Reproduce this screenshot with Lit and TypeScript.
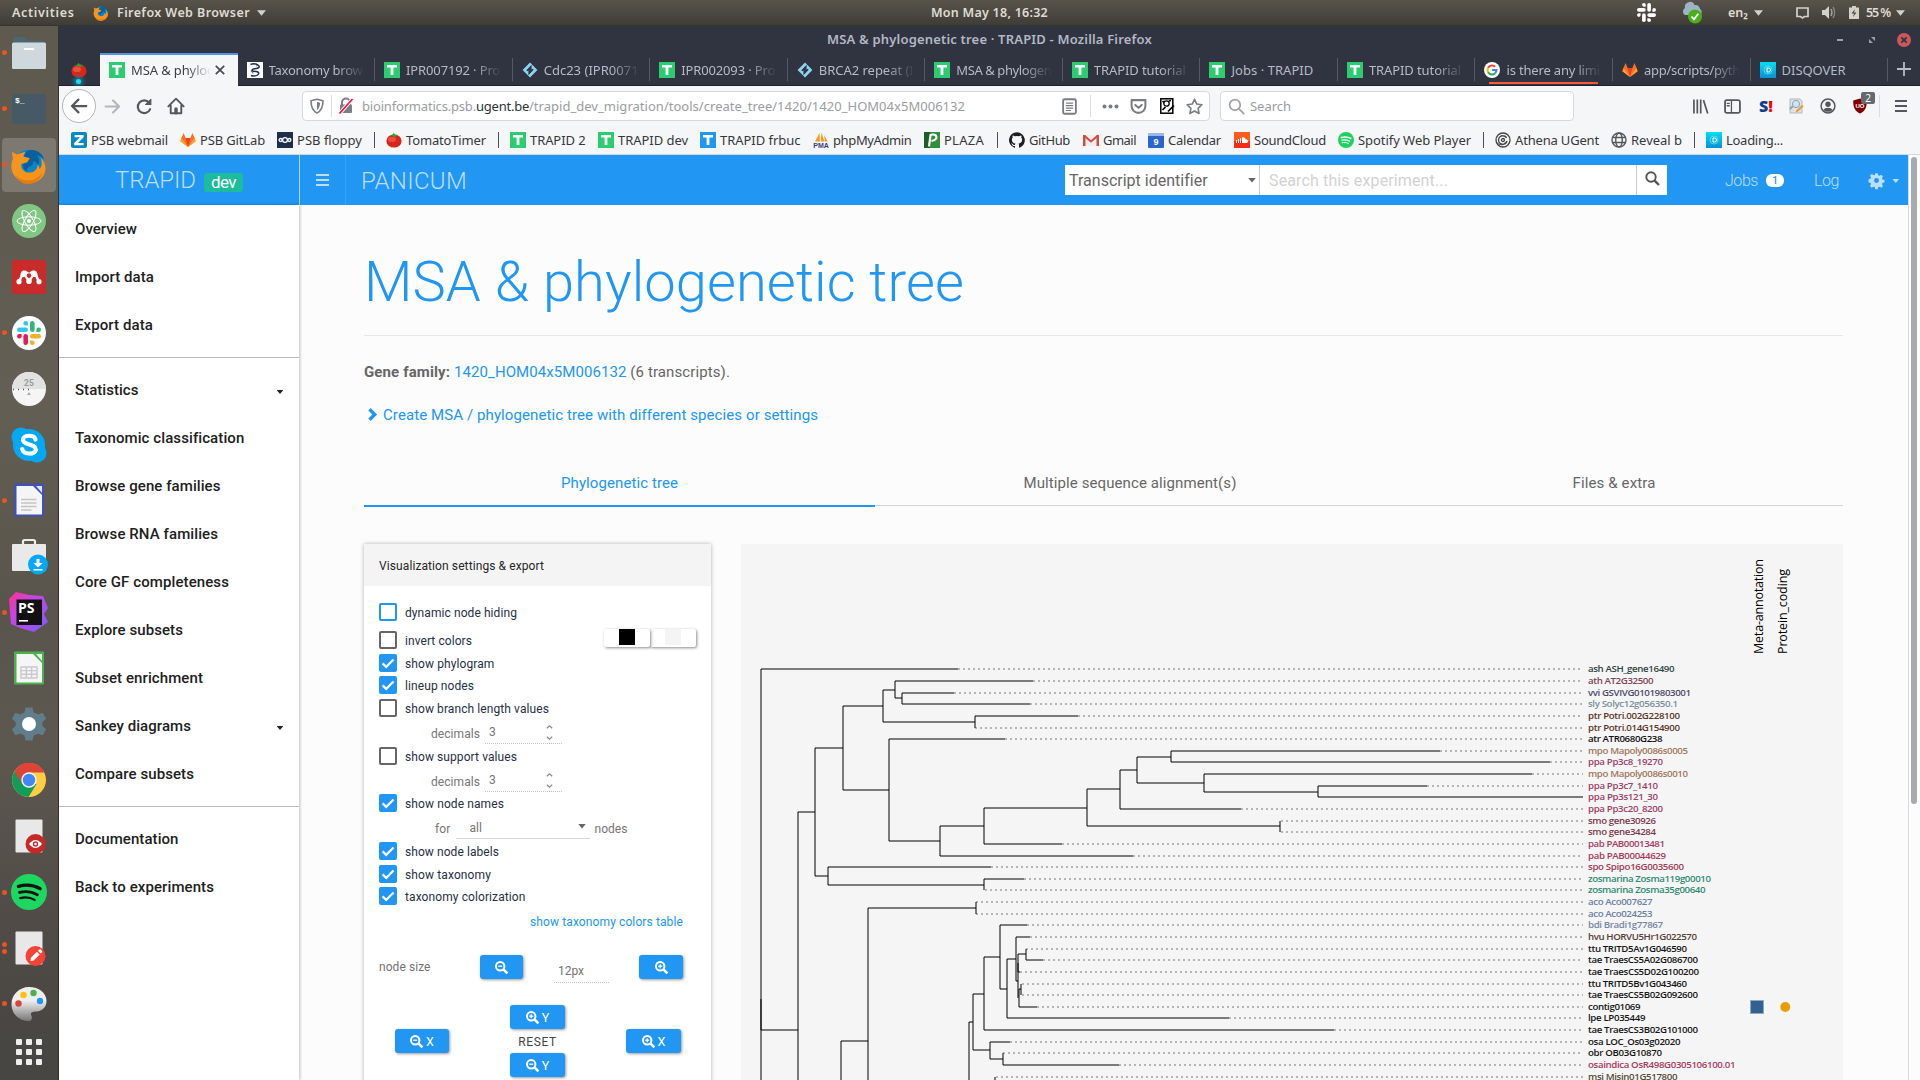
import { LitElement, html, svg, css, nothing, TemplateResult } from "lit";
import { customElement, property } from "lit/decorators.js";

/* Inline text whose tracking is adjusted so that it fills a given width. */
@customElement("fit-text")
class FitText extends LitElement {
  static styles = css`
    :host { display: inline-block; white-space: pre; }
  `;
  @property({ type: Number }) w = 0;
  @property() text = "";
  render() {
    return html`<span>${this.text}</span>`;
  }
  firstUpdated() {
    const span = this.renderRoot.querySelector("span") as HTMLElement;
    const natural = span.getBoundingClientRect().width;
    if (this.w > 0 && natural > 0) {
      this.style.letterSpacing = `${(this.w - natural) / this.text.length}px`;
    }
  }
}

const fit = (text: string, w: number) => html`<fit-text .text=${text} .w=${w}></fit-text>`;

type Placed = [number, unknown];
/* Lays cells out in a row; every cell reaches up to the start of the next one. */
const strip = (start: number, end: number, items: Placed[]) => html`
  <div class="cell" style="width:${items[0][0] - start}px"></div>
  ${items.map(([x, content], i) => {
    const next = i + 1 < items.length ? items[i + 1][0] : end;
    return html`<div class="cell" style="width:${next - x}px">${content}</div>`;
  })}
`;

const ico = (w: number, h: number, body: unknown, vb = `0 0 ${w} ${h}`) =>
  html`<svg class="ico" width=${w} height=${h} viewBox=${vb}>${body}</svg>`;

/* ---------- small icons, 16 x 16 ---------- */
const tIcon = (c = "#2ecc71") => ico(16, 16, svg`<rect width="16" height="16" fill=${c}/><path d="M3 3h10v2.6H9.4V13H6.6V5.6H3z" fill="#fff"/>`);
const tomato = ico(16, 16, svg`<ellipse cx="8" cy="9" rx="7.6" ry="6.6" fill="#d9261c"/><ellipse cx="6" cy="7.4" rx="4" ry="2.6" fill="#f0604e" opacity=".7"/><path d="M8 4.6 3.6 3.4 6.6 2.6 7.6.8l1.2 1.8 3.6.4-3 1.2 1 2z" fill="#3f9a33"/>`);
const gitlab = ico(16, 16, svg`<path d="M8 15 .4 9.2 1.6 5.6 3.6 1l2 5h4.8l2-5 2 4.6 1.2 3.6z" fill="#fc6d26"/><path d="M8 15 5.6 6h4.8z" fill="#e24329"/><path d="M.4 9.2 8 15 1.6 6zM15.6 9.2 8 15l6.4-9z" fill="#fca326"/>`);
const zimbra = ico(16, 16, svg`<rect width="16" height="16" rx="2" fill="#0a87c4"/><path d="M3.6 3h9v2.2L7 11h5.6v2.2H3.2V11l5.7-5.8H3.6z" fill="#fff"/>`);
const floppy = ico(16, 16, svg`<rect width="16" height="16" fill="#1d2d4a"/><g fill="none" stroke="#fff" stroke-width="1.3"><circle cx="8" cy="8" r="2.4"/><circle cx="3.6" cy="8" r="1.5"/><circle cx="12.4" cy="8" r="1.5"/></g>`);
const interpro = ico(16, 16, svg`<path d="M8 0.6 15.4 8 8 15.4.6 8z" fill="#8fd3f2"/><path d="M4.800 8.600 9 4.300v2.600zM11.200 7.400 7 11.700V9.100z" fill="#303440" stroke="#303440" stroke-width="1.200"/>`);
const ncbi = ico(16, 16, svg`<rect width="16" height="16" fill="#fff"/><path d="M3.500 2.500c3-1.500 7.500-.5 8.500 1.500s-2 2.500-4.500 2.800S4 9 7 9.300s5.500.7 4.500 2.700-5 2.500-7.500 1.500" fill="none" stroke="#20304f" stroke-width="1.500"/><path d="M9 1.800c1.500.5 1.500 1.700.5 2.200M5 8c-1.500 1 0 3 1.500 3" fill="none" stroke="#20304f" stroke-width=".8"/>`);
const google = ico(16, 16, svg`<circle cx="8" cy="8" r="8" fill="#fff"/><g fill="none" stroke-width="2.1"><path d="M11.200 4.800A4.500 4.500 0 0 0 4.100 5.800" stroke="#ea4335"/><path d="M4.100 5.800a4.500 4.500 0 0 0 0 4.400" stroke="#fbbc05"/><path d="M4.100 10.200a4.500 4.500 0 0 0 7 1" stroke="#34a853"/><path d="M8 8h4.500a4.500 4.500 0 0 1-1.400 3.200" stroke="#4285f4"/></g>`);
const disq = ico(16, 16, svg`<defs><linearGradient id="dq" x1="0" y1="0" x2="0" y2="1"><stop offset="0" stop-color="#00e0ee"/><stop offset="1" stop-color="#0a8fd8"/></linearGradient></defs><rect width="16" height="16" fill="url(#dq)"/><circle cx="8" cy="8" r="4" fill="none" stroke="#6fdcf5" stroke-width=".8"/><path d="M7 6h1.500a2 2 0 0 1 0 4H7z" fill="none" stroke="#fff" stroke-width="1"/>`);
const pma = ico(16, 16, svg`<path d="M2 9.500 6.500 1 7 9.500zM7.800 9.500 8.500.6l3 8.900zM12 9.500 11 3l3.600 6.500z" fill="#f89c1c"/><text x="8" y="16" font-family="Liberation Sans" font-size="7" font-weight="700" fill="#3d3d7a" text-anchor="middle">PMA</text>`);
const plaza = ico(16, 16, svg`<rect width="16" height="16" fill="#2f8f3a"/><rect width="6" height="16" fill="#1b5e2a"/><path d="M5 14.500 6.500 3c7-2.500 8.500 5 1 6" fill="none" stroke="#fff" stroke-width="2.200"/>`);
const github = ico(16, 16, svg`<path d="M8 .2a8 8 0 0 0-2.500 15.600c.4.100.5-.2.500-.4v-1.500c-2.200.5-2.700-1-2.700-1-.4-.9-.9-1.200-.9-1.200-.7-.5.100-.5.100-.5.800.1 1.200.8 1.200.8.700 1.300 1.900.9 2.300.7.100-.5.300-.9.500-1.100-1.800-.2-3.600-.9-3.600-4 0-.9.300-1.600.8-2.100-.1-.2-.4-1 .1-2.100 0 0 .7-.2 2.200.8a7.600 7.600 0 0 1 4 0c1.500-1 2.200-.8 2.200-.8.500 1.100.200 1.900.1 2.100.5.600.8 1.300.8 2.100 0 3.100-1.900 3.800-3.700 4 .3.300.6.800.6 1.500v2.200c0 .2.100.5.600.4A8 8 0 0 0 8 .2z" fill="#1b1f23"/>`);
const gmail = ico(16, 16, svg`<rect x="1" y="3" width="14" height="11" fill="#eee"/><path d="M1 3.500 8 9.500 15 3.500" fill="none" stroke="#d54b3d" stroke-width="2"/><path d="M0 3h2.500v11H0zM13.500 3H16v11h-2.500z" fill="#d54b3d"/>`);
const calendar = ico(16, 16, svg`<rect y="1" width="16" height="15" rx="1" fill="#2a66d0"/><rect y="1" width="16" height="3" fill="#9cb7e4"/><text x="8" y="13" font-family="Liberation Sans" font-size="9" font-weight="700" fill="#fff" text-anchor="middle">9</text>`);
const soundcloud = ico(16, 16, svg`<rect width="16" height="16" fill="#ff5a1f"/><rect y="9" width="16" height="7" fill="#fb2a18"/><path d="M2.500 8v3M4.500 7v4M6.500 6v5" stroke="#fff" stroke-width="1"/><path d="M8 5.500c2-.8 3.500.6 3.700 2 1.500-.3 2.500.6 2.500 1.800 0 1-.8 1.700-1.700 1.700H8z" fill="#fff"/>`);
const spotify = (s: number, bg: string, fg: string) => ico(s, s, svg`<circle cx="8" cy="8" r="8" fill=${bg}/><g fill="none" stroke=${fg} stroke-linecap="round"><path d="M3.300 5.500c3.300-.9 6.800-.6 9.600 1" stroke-width="1.500"/><path d="M3.800 8.200c2.700-.7 5.500-.4 7.900 1" stroke-width="1.250"/><path d="M4.100 10.700c2.300-.5 4.500-.3 6.400.8" stroke-width="1"/></g>`, "0 0 16 16");
const athena = ico(16, 16, svg`<g fill="none" stroke="#444"><circle cx="8" cy="8" r="7" stroke-width="1.300"/><path d="M12 9A4.300 4.300 0 1 1 8 3.700c2 0 3 1 3.500 2.300" stroke-width="1.400"/><circle cx="8" cy="8" r="1.500" stroke-width="1.300"/><path d="M2.500 11c3 3 7 2 8-1" stroke-width="1"/></g>`);
const globe = ico(16, 16, svg`<g fill="none" stroke="#55595d" stroke-width="1.400"><circle cx="8" cy="8" r="7"/><ellipse cx="8" cy="8" rx="3.300" ry="7"/><path d="M1.500 5.500h13M1.500 10.500h13"/></g>`);

const firefox = (s: number) => ico(s, s, svg`<circle cx="20" cy="20" r="16" fill="#0b84cc"/><path d="M18 5c8-3 16 2 18 9-3-3-5-4-8-4 3 3 4 7 1 10-1-3-3-4-5-4 1 3-1 5-4 6-2 1-3 3-1 5-4-1-6-5-5-8l6-3c-2-2-5-2-6-4z" fill="#0a5f9e"/><path d="M2 6 7 9l9-3-2 5 7 2-3 4-6 2c-1 5 3 9 8 9 6 0 9-4 9-8 2 1 2 3 2 4 3-2 3-8 1-12 7 6 7 16 1 22-7 7-19 7-26 0C1 28 0 20 3 14z" fill="#f7941d"/><path d="M6 31c8 8 22 7 28-3-2 8-8 12-15 12-6 0-11-4-13-9z" fill="#e67c0c"/>`, "0 0 40 40");

const caret = (c: string, w = 9, h = 6) => html`<svg class="ico" width=${w} height=${h} viewBox="0 0 10 6"><path d="M0 0h10L5 6z" fill=${c}/></svg>`;

/* Four bars with a rounded stub each, turned around the centre. */
const slackGlyph = (s: number, c: string[]) => ico(s, s, svg`
  ${[0, 1, 2, 3].map((i) => svg`<g fill=${c[i]} transform="rotate(${i * 90} 12 12)"><rect x="0" y="6.400" width="11" height="4.600" rx="2.300"/><path d="M11 4.600H8.700A2.300 2.300 0 1 1 11 2.300z"/></g>`)}`, "0 0 24 24");

/* ---------- dock ---------- */
const D = (body: unknown) => ico(40, 40, body);
const sheet = (c: string) => svg`<rect x="6.500" y="3.500" width="27" height="33" rx="1" fill="#e8e8e8"/><circle cx="26.500" cy="28" r="10" fill=${c}/>`;
const dock: { icon: TemplateResult; dots?: number; active?: boolean }[] = [
  { dots: 1, icon: D(svg`<path d="M4.500 4h11l3 3.500h16V20h-30z" fill="#4d6673"/><rect x="3" y="9.500" width="34" height="26.500" rx="1.500" fill="#cfd8dc"/><rect x="15" y="15" width="10" height="2" fill="#fff"/>`) },
  { dots: 1, icon: D(svg`<rect x="3" y="5" width="34" height="30" rx="1.500" fill="#455a64"/><text x="6" y="14" font-family="Liberation Mono" font-weight="700" font-size="8" fill="#fff">$_</text>`) },
  { dots: 1, active: true, icon: firefox(38) },
  { icon: D(svg`<circle cx="20" cy="20" r="17" fill="#81c784"/><g fill="none" stroke="#fff" stroke-width="1"><ellipse cx="20" cy="20" rx="12" ry="4.200"/><ellipse cx="20" cy="20" rx="12" ry="4.200" transform="rotate(60 20 20)"/><ellipse cx="20" cy="20" rx="12" ry="4.200" transform="rotate(120 20 20)"/></g><circle cx="20" cy="20" r="2" fill="#fff"/>`) },
  { icon: D(svg`<rect x="3" y="3" width="34" height="34" rx="2" fill="#c92a2a"/><path d="M10 24.500 13 18.500M16 18l4 6 4-6M27 18.500l3 6" fill="none" stroke="#fff" stroke-width="2.600"/><path d="M11.500 17a4 4 0 0 1 7-2.200q1.500 1.200 3 0A4 4 0 0 1 28.500 17v3h-4L20 17l-4.500 3h-4z" fill="#fff"/><g fill="#fff"><circle cx="10" cy="24.700" r="2.600"/><circle cx="20" cy="24.200" r="2.800"/><circle cx="30" cy="24.700" r="2.600"/></g><circle cx="20" cy="18.500" r="2.200" fill="#c92a2a"/>`) },
  { dots: 1, icon: html`<div class="slackdisc">${slackGlyph(24, ["#36c5f0", "#2eb67d", "#ecb22e", "#e01e5a"])}</div>` },
  { icon: D(svg`<circle cx="20" cy="20" r="17" fill="#f5f5f5"/><path d="M3 20a17 17 0 0 1 34 0z" fill="#e2e2e2"/><text x="20" y="17" font-family="Roboto" font-weight="700" font-size="8.500" fill="#9b9b9b" text-anchor="middle">25</text><path d="M4 20.500h17" stroke="#555" stroke-width="1.500" stroke-dasharray="1 4"/><path d="M18 26h4l-2-3z" fill="#aaa"/>`) },
  { icon: D(svg`<circle cx="20" cy="20" r="16" fill="#03a9f4"/><circle cx="12" cy="12" r="9.500" fill="#03a9f4"/><circle cx="28" cy="28" r="9.500" fill="#03a9f4"/><path d="M26.500 14.500c-1-5-12.500-5-12.500.2 0 5.800 12.800 3.600 12.800 9.800 0 5.600-13 5.300-13.600-.5" fill="none" stroke="#fff" stroke-width="4.200" stroke-linecap="round"/>`) },
  { dots: 1, icon: D(svg`<rect x="5" y="3.500" width="30" height="33" rx="1" fill="#3f51b5"/><path d="M7.500 6H24l9 9v19.500H7.500z" fill="#f5f5f5"/><path d="M27 6h6v7z" fill="#dfe3f5"/><path d="M12 19.500h15.500M12 23h15.500M12 26.500h15.500M12 30h10.500" stroke="#c3c3c3" stroke-width="1.500"/>`) },
  { icon: D(svg`<path d="M14 8V5.500q0-1.500 1.500-1.500h9q1.500 0 1.500 1.500V8" fill="none" stroke="#ececec" stroke-width="2.200"/><rect x="3" y="8" width="34" height="27" rx="1" fill="#e9e9e9"/><circle cx="29" cy="28.500" r="10" fill="#03a9f4"/><path d="M27.500 23h3v4h3L29 31.500 24.500 27h3zM24.500 33h9v1.500h-9z" fill="#fff"/>`) },
  { dots: 1, icon: D(svg`<defs><linearGradient id="ps" x1="0" y1="0" x2="1" y2="1"><stop offset="0" stop-color="#ff318c"/><stop offset=".35" stop-color="#c945e0"/><stop offset="1" stop-color="#7b5cff"/></linearGradient></defs><path d="M0 7 7 0l13 3 14 1 5 12-4 6 4 8-7 5-7 5-14-4-9-4z" fill="url(#ps)"/><rect x="7.500" y="7.500" width="25.500" height="25.500" fill="#111"/><text x="9" y="20.500" font-family="Open Sans" font-weight="700" font-size="14" fill="#fff">PS</text><rect x="10" y="28" width="9" height="1.600" fill="#fff"/>`) },
  { icon: D(svg`<rect x="5" y="3.500" width="30" height="33" rx="1" fill="#4caf50"/><path d="M7.500 6H24l9 9v19.500H7.500z" fill="#f5f5f5"/><path d="M27 6h6v7z" fill="#dff2df"/><path d="M12 19h16v11H12zM12 22.600h16M12 26.300h16M17.300 19v11M22.600 19v11" fill="none" stroke="#c9c9c9" stroke-width="1.400"/>`) },
  { icon: D(svg`<path d="M16.500 3.500h7l1.200 5 4 2 5-1.800 3.300 6-3.700 3.600v3.400l3.700 3.600-3.300 6-5-1.800-4 2-1.200 5h-7l-1.200-5-4-2-5 1.800-3.300-6 3.700-3.600v-3.400L3 14.700l3.300-6 5 1.800 4-2z" fill="#607d8b"/><circle cx="20" cy="20" r="7" fill="#fff"/>`) },
  { icon: D(svg`<circle cx="20" cy="20" r="17" fill="#ffcd40"/><path d="M5.300 11.500A17 17 0 0 0 19.500 37l8-13L20 20z" fill="#0f9d58"/><path d="M5.500 11A17 17 0 0 1 35.500 12.500H20L13 24z" fill="#db4437"/><circle cx="20" cy="20" r="7.700" fill="#f1f1f1"/><circle cx="20" cy="20" r="6.200" fill="#4285f4"/>`) },
  { icon: D(svg`${sheet("#c62828")}<path d="M20 28q6.500-8 13 0-6.500 8-13 0z" fill="#fff"/><circle cx="26.500" cy="28" r="2" fill="none" stroke="#c62828" stroke-width="1.400"/>`) },
  { dots: 1, icon: spotify(36, "#1ed760", "#121212") },
  { dots: 2, icon: D(svg`${sheet("#f44336")}<path d="m21.500 33 .4-3.200 6-6 2.800 2.800-6 6zM28.900 22.800l1.300-1.300q.8-.6 1.500 0l1.300 1.300q.6.8 0 1.500l-1.300 1.300z" fill="#fff"/>`) },
  { dots: 1, icon: D(svg`<defs><linearGradient id="pl" x1="0" y1="0" x2="0" y2="1"><stop offset=".4" stop-color="#eee"/><stop offset="1" stop-color="#777"/></linearGradient></defs><path d="M20 3c10 0 17.500 6 17.500 14S31 27.500 27 27.500c-5 0-6 2-4.500 4.500 1 2 0 5-2.500 5C9 37 2.500 29 2.500 20S10 3 20 3z" fill="url(#pl)"/><circle cx="14.500" cy="11" r="3.200" fill="#ffc107"/><circle cx="24.500" cy="9" r="3.200" fill="#4caf50"/><circle cx="31" cy="17" r="3.200" fill="#2196f3"/><circle cx="9.500" cy="19.500" r="3.200" fill="#db4437"/>`) },
];

/* ---------- navigation icons ---------- */
const N = "#54585c";
const stroke = (s: number, body: unknown, c = N, w = 2) => html`<svg class="ico" width=${s} height=${s} viewBox="0 0 16 16" fill="none" stroke=${c} stroke-width=${w} stroke-linecap="round" stroke-linejoin="round">${body}</svg>`;
const arrowL = stroke(18, svg`<path d="M14.500 8H2M7.500 2.300 1.800 8l5.700 5.700"/>`);
const arrowR = stroke(17, svg`<path d="M1.500 8H14M8.500 2.300 14.200 8l-5.700 5.700"/>`, "#b4b6b9");
const reload = stroke(17, svg`<path d="M13.300 10.500a6 6 0 1 1-.9-6"/><path d="M14 1.200v5h-5z" fill="#54585c" stroke-width="1"/>`);
const home = stroke(18, svg`<path d="M1.200 8.300 8 1.500l6.800 6.800M3.300 7.500V14.500h9.400V7.500"/><path d="M8 14v-3.500" stroke-width="3"/>`, N, 1.7);
const shield = stroke(16, svg`<path d="M8 1.200 14 2.700c0 6-1.500 10-6 12.300C3.500 12.700 2 8.700 2 2.700z"/><path d="M8 4v8c2-1.500 3-4 3.200-7.200z" fill="#7b7e82" stroke="none"/>`, "#7b7e82", 1.6);
const lock = ico(18, 18, svg`<path d="M5 8V5.500a4 4 0 0 1 8 0V8" fill="none" stroke="#7b7e82" stroke-width="2"/><rect x="3" y="7.500" width="12" height="8.500" rx="1" fill="#7b7e82"/><path d="M3 16 15.500 2" stroke="#fff" stroke-width="3.500"/><path d="M2.500 16.500 15.500 2" stroke="#f5114c" stroke-width="1.800"/>`);
const reader = stroke(17, svg`<rect x="2" y="1.200" width="12" height="13.600" rx="1.500"/><path d="M5 4.800h6M5 7.200h6M5 9.500h6M5 11.800h4" stroke-width="1.100"/>`, "#797c80", 1.700);
const dots3 = ico(17, 5, svg`<g fill="#797c80"><circle cx="2.500" cy="2.500" r="2"/><circle cx="8.500" cy="2.500" r="2"/><circle cx="14.500" cy="2.500" r="2"/></g>`);
const pocket = stroke(17, svg`<path d="M1.500 2h13v5.500a6.500 6.500 0 0 1-13 0zM5 6.500 8 9.300l3-2.800"/>`, "#797c80", 1.900);
const qr = ico(15, 16, svg`<rect x=".8" y=".8" width="12" height="14.400" fill="#fff" stroke="#000" stroke-width="1.500"/><circle cx="6.500" cy="5.500" r="2.700" fill="none" stroke="#000" stroke-width="1.300"/><path d="M2.500 3 4 4.500M9 3l2-.5M2.500 12l3-3M8 13.500l6-6" stroke="#000" stroke-width="1.700"/>`);
const star = stroke(17, svg`<path d="m8 1.200 2.100 4.500 4.900.6-3.600 3.400.9 4.900L8 12.200l-4.300 2.400.9-4.900L1 6.300l4.900-.6z"/>`, "#797c80", 1.500);
const glass = stroke(17, svg`<circle cx="6.500" cy="6.500" r="5"/><path d="m10.300 10.300 4.500 4.500"/>`, "#a0a2a5", 1.600);
const library = stroke(17, svg`<path d="M1.800 1.500v13M5 1.500v13M8.200 1.500v13M10.800 2l4 12.500" stroke-linecap="butt"/>`, N, 1.600);
const sidebarI = stroke(17, svg`<rect x="1" y="2" width="14" height="12" rx="1.500"/><path d="M7 2v12M3 5h2M3 7.300h2" stroke-width="1.200"/>`, N, 1.700);
const simg = ico(16, 16, svg`<path d="M2 1h10l2 2v12H2z" fill="#dfe3e6" stroke="#a9a9a9" stroke-width=".8"/><circle cx="8" cy="6" r="3.600" fill="#cfe4f5" stroke="#8aa4b8"/><path d="m2 11 3-3" stroke="#8aa4b8" stroke-width="1.800"/><path d="m7.500 14.500.8-2.300L14 6.800l1.700 1.700-5.800 5.300z" fill="#e2a04a"/>`);
const person = ico(16, 16, svg`<circle cx="8" cy="8" r="6.900" fill="none" stroke=${N} stroke-width="1.500"/><circle cx="8" cy="6.200" r="2.700" fill=${N}/><path d="M3.600 11.700c1-2.700 7.800-2.700 8.800 0-2 2.800-6.800 2.800-8.800 0z" fill=${N}/>`);
const ublock = ico(16, 16, svg`<path d="m8 .4 6.800 2c0 6.400-1 10-6.800 13.200C2.200 12.400 1.200 8.800 1.200 2.400z" fill="#800000"/><text x="8" y="9.500" text-anchor="middle" font-family="Liberation Sans" font-size="6" font-weight="700" fill="#fff">UO</text>`);
const burger = (w: number, h: number, c: string, s: number) => html`<svg class="ico" width=${w} height=${h} viewBox="0 0 ${w} ${h}"><path d="M0 ${s / 2}h${w}M0 ${h / 2}h${w}M0 ${h - s / 2}h${w}" stroke=${c} stroke-width=${s}/></svg>`;
const zoomI = (plus: boolean) => html`<svg class="ico" width="13" height="13" viewBox="0 0 13 13" fill="none" stroke="#fff"><circle cx="5.200" cy="5.200" r="4.200" stroke-width="2"/><path d="m8.400 8.400 4 4" stroke-width="2.500"/><path d="M3.200 5.200h4" stroke-width="1.300"/>${plus ? svg`<path d="M5.200 3.200v4" stroke-width="1.300"/>` : nothing}</svg>`;
const gear = ico(15, 15, svg`<path d="M6.200 0h2.600l.4 2 1.500.6 1.700-1.100 1.800 1.800-1.100 1.700.6 1.500 2 .4v2.600l-2 .4-.6 1.500 1.100 1.700-1.800 1.800-1.700-1.100-1.500.6-.4 2H6.200l-.4-2-1.500-.6-1.700 1.100-1.800-1.800 1.100-1.700-.6-1.500-2-.4V6.200l2-.4.6-1.500L.8 2.600 2.600.8l1.700 1.100L5.800 2zM7.500 5a2.500 2.500 0 1 0 0 5 2.500 2.500 0 0 0 0-5z" fill="#bbdefb" fill-rule="evenodd"/>`, "0 -.2 15 15.400");

/* ---------- tree data ---------- */
type Leaf = [string, number, string, number, number];
/* label, y, colour, label width, x at which the dotted guide starts */
const leaves: Leaf[] = [
  ["ash ASH_gene16490", 669, "#2f4540", 86.5, 958],
  ["ath AT2G32500", 681, "#7d4658", 65.5, 1033],
  ["vvi GSVIVG01019803001", 693, "#4a4a6a", 103, 954],
  ["sly Solyc12g056350.1", 704, "#7a8f99", 90, 1030],
  ["ptr Potri.002G228100", 716, "#5a3526", 92, 1078],
  ["ptr Potri.014G154900", 728, "#5a3526", 92, 975],
  ["atr ATR0680G238", 739, "#111111", 74.5, 1005],
  ["mpo Mapoly0086s0005", 751, "#a0765c", 100, 1440],
  ["ppa Pp3c8_19270", 762, "#9c3f68", 75, 1550],
  ["mpo Mapoly0086s0010", 774, "#a0765c", 100, 1532],
  ["ppa Pp3c7_1410", 786, "#9c3f68", 70, 1427],
  ["ppa Pp3s121_30", 797, "#9c3f68", 70, 1583],
  ["ppa Pp3c20_8200", 809, "#9c3f68", 75, 1241],
  ["smo gene30926", 821, "#7a3a50", 68, 1281],
  ["smo gene34284", 832, "#7a3a50", 68, 1281],
  ["pab PAB00013481", 844, "#a83a5e", 77, 1062],
  ["pab PAB00044629", 856, "#a83a5e", 78, 1133],
  ["spo Spipo16G0035600", 867, "#a03a56", 96, 991],
  ["zosmarina Zosma119g00010", 879, "#2f8a72", 123, 1024],
  ["zosmarina Zosma35g00640", 890, "#2f8a72", 117.5, 985],
  ["aco Aco007627", 902, "#6a80a2", 64.500, 976],
  ["aco Aco024253", 914, "#6a80a2", 64.500, 976],
  ["bdi Bradi1g77867", 925, "#7587a8", 75, 1027],
  ["hvu HORVU5Hr1G022570", 937, "#564038", 109, 1030],
  ["ttu TRITD5Av1G046590", 949, "#161616", 99, 1026],
  ["tae TraesCS5A02G086700", 960, "#161616", 110, 1043],
  ["tae TraesCS5D02G100200", 972, "#161616", 111, 1020],
  ["ttu TRITD5Bv1G043460", 984, "#161616", 99, 1022],
  ["tae TraesCS5B02G092600", 995, "#161616", 110, 1022],
  ["contig01069", 1007, "#161616", 52.5, 1037],
  ["lpe LP035449", 1018, "#161616", 57.5, 1229],
  ["tae TraesCS3B02G101000", 1030, "#161616", 110, 1334],
  ["osa LOC_Os03g02020", 1042, "#161616", 92.5, 1010],
  ["obr OB03G10870", 1053, "#161616", 74, 1003],
  ["osaindica OsR498G0305106100.01", 1065, "#a83a5e", 147.5, 1119],
  ["msi Misin01G517800", 1077, "#564a38", 89.500, 996],
];
/* horizontal branches: y, x1, x2 */
const hor = [
  [669, 761, 958], [1030, 761, 798], [812, 798, 815], [748, 815, 843], [706, 843, 883], [690, 883, 895], [681, 895, 1033],
  [698, 895, 902], [693, 902, 954], [704, 902, 1030], [722, 883, 975], [716, 975, 1078], [790, 843, 889], [739, 889, 1005],
  [841, 889, 940], [856, 940, 1133], [826, 940, 984], [844, 984, 1062], [808, 984, 1087], [826, 1087, 1280], [789, 1087, 1120],
  [809, 1120, 1241], [770, 1120, 1137], [757, 1137, 1171], [751, 1171, 1440], [762, 1171, 1550], [783, 1137, 1204], [774, 1204, 1532],
  [792, 1204, 1318], [786, 1318, 1427], [797, 1318, 1583], [876, 815, 828], [867, 828, 991], [885, 828, 984], [879, 984, 1024],
  [908, 868, 976], [1041, 841, 868], [925, 1000, 1027], [957, 984, 1000], [989, 1000, 1007], [1018, 1007, 1229], [959, 1007, 1016],
  [937, 1016, 1030], [981, 1016, 1018], [954, 1018, 1026], [960, 1026, 1043], [972, 1018, 1020], [989, 1019, 1021], [1007, 1019, 1037],
  [1030, 984, 1334], [994, 973, 984], [1050, 973, 990], [1042, 990, 1010], [1059, 990, 1003], [1065, 1003, 1119], [1022, 969, 973],
];
/* vertical branches: x, y1, y2 */
const ver = [
  [761, 669, 1090], [761, 999, 1030], [798, 812, 1090], [815, 748, 876], [843, 706, 790], [883, 690, 722], [895, 681, 698], [902, 693, 704],
  [975, 716, 728], [889, 739, 841], [940, 826, 856], [984, 808, 844], [1087, 789, 826], [1280, 821, 832], [1120, 770, 809], [1137, 757, 783],
  [1171, 751, 762], [1204, 774, 792], [1318, 786, 797], [828, 867, 885], [984, 879, 890], [868, 908, 1090], [976, 902, 914], [841, 1041, 1090],
  [1000, 925, 989], [984, 957, 1030], [1007, 959, 1018], [1016, 937, 981], [1018, 954, 972], [1018, 963, 998], [1026, 949, 960], [1021, 984, 995],
  [1019, 989, 1007], [973, 994, 1050], [990, 1042, 1059], [1003, 1053, 1065], [969, 1022, 1090], [995, 1077, 1090],
];

const T = tIcon();
const tabs: [TemplateResult, string, number][] = [
  [T, "MSA & phylog", 84],
  [ncbi, "Taxonomy brow", 94],
  [T, "IPR007192 · Pro", 94],
  [interpro, "Cdc23 (IPR0071", 95],
  [T, "IPR002093 · Pro", 94],
  [interpro, "BRCA2 repeat (I", 95],
  [T, "MSA & phylogen", 95],
  [T, "TRAPID tutorial", 92],
  [T, "Jobs · TRAPID", 82],
  [T, "TRAPID tutorial", 92],
  [google, "is there any limit", 98],
  [gitlab, "app/scripts/pyth", 96],
  [disq, "DISQOVER", 64],
];

const bm = (icon: TemplateResult, text: string, w: number) => html`${icon}<span class="bmt">${fit(text, w)}</span>`;
const bsep = html`<i class="bsep"></i>`;

type Row = { label: string; w: number; h: number; on?: boolean; focus?: boolean; sub?: "dec" | "for"; swatch?: boolean };
const rows: Row[] = [
  { label: "dynamic node hiding", w: 112, h: 28, focus: true },
  { label: "invert colors", w: 67, h: 23, swatch: true },
  { label: "show phylogram", w: 89.5, h: 22, on: true },
  { label: "lineup nodes", w: 69, h: 23, on: true },
  { label: "show branch length values", w: 144, h: 48, sub: "dec" },
  { label: "show support values", w: 112, h: 47, sub: "dec" },
  { label: "show node names", w: 99, h: 48, on: true, sub: "for" },
  { label: "show node labels", w: 94, h: 23, on: true },
  { label: "show taxonomy", w: 86, h: 22, on: true },
  { label: "taxonomy colorization", w: 120.5, h: 18, on: true },
];

const menu: (string | [string, number, boolean?])[] = [
  ["Overview", 62], ["Import data", 79], ["Export data", 78], "-",
  ["Statistics", 63.5, true], ["Taxonomic classification", 169], ["Browse gene families", 145.5], ["Browse RNA families", 143],
  ["Core GF completeness", 154], ["Explore subsets", 108], ["Subset enrichment", 128], ["Sankey diagrams", 116, true], ["Compare subsets", 119], "-",
  ["Documentation", 103.5], ["Back to experiments", 139],
];

@customElement("app-root")
class AppRoot extends LitElement {
  static styles = css`
    :host { display: block; width: 1920px; height: 1080px; overflow: hidden; background: #fcfcfc; font-family: Roboto, sans-serif; color: #666; }
    * { box-sizing: border-box; }
    .ico { display: block; flex: none; overflow: visible; }
    .screen { display: flex; flex-direction: column; height: 1080px; }
    .cell { flex: none; display: flex; align-items: center; height: 100%; white-space: nowrap; }
    .topbar { height: 26px; flex: none; display: flex; background: linear-gradient(#58544b, #3f3d37); color: #dfdbd2; font: 600 12.5px "Noto Sans", sans-serif; border-bottom: 1px solid #34352f; }
    .topbar fit-text { padding-bottom: 1px; }
    .below { display: flex; flex: 1; min-height: 0; }
    .dock { width: 59px; flex: none; background: linear-gradient(#5f5a4f 0%, #5e5a50 15%, #645f54 35%, #5a554c 55%, #5d584f 68%, #504b47 85%, #464541 100%); border-right: 1px solid #35332e; display: flex; flex-direction: column; }
    .slot { height: 55.94px; flex: none; display: flex; align-items: center; position: relative; padding: 0 0 2px 2px; }
    .tile { width: 54px; height: 54px; border-radius: 4px; display: flex; align-items: center; justify-content: center; }
    .tile.active { background: #7d7970; }
    .dots { position: absolute; left: 2px; top: -1px; height: 100%; display: flex; flex-direction: column; justify-content: center; gap: 2.500px; }
    .dot { width: 5px; height: 5px; border-radius: 50%; background: #e95420; }
    .slackdisc { width: 34px; height: 34px; border-radius: 50%; background: #fff; display: flex; align-items: center; justify-content: center; }
    .grid9 { display: grid; grid-template-columns: repeat(3, 6px); grid-auto-rows: 6px; gap: 4px; padding: 6px 0 0 16px; }
    .grid9 i { border-radius: 1px; background: #eee; }
    .window { flex: 1; min-width: 0; display: flex; flex-direction: column; }
    .title { height: 27px; flex: none; background: #303440; display: flex; color: #b2b8c4; font: 600 13px "Noto Sans", sans-serif; }
    .title fit-text { padding-bottom: 2px; }
    .title .close { width: 14px; height: 14px; border-radius: 50%; background: #cc575d; color: #303440; display: flex; align-items: center; justify-content: center; }
    .tabs { height: 33px; flex: none; background: #303440; display: flex; color: #b4bac6; font: 400 13px "Noto Sans", sans-serif; border-bottom: 1px solid #1f222b; }
    .pin { width: 41px; display: flex; flex-direction: column; align-items: center; padding: 9px 2px 0 0; }
    .pin i { width: 5px; height: 5px; border-radius: 50%; background: #19dcf0; box-shadow: 0 0 4px 2px #0e8aa0; margin-top: 1px; }
    .tab { width: 137.55px; flex: none; display: flex; align-items: center; padding: 1px 0 0 9px; position: relative; }
    .tab::after { content: ""; position: absolute; right: 0; top: 5px; bottom: 4px; width: 1px; background: #555a66; }
    .tab.on { background: #f5f6f7; color: #3b3e45; border-top: 2px solid #5294e2; padding-top: 0; height: 33px; }
    .tab.on .ico, .tab.on .tt { margin-top: -1px; }
    .tab.on::after { display: none; }
    .tt { width: 96px; margin-left: 6px; overflow: hidden; -webkit-mask-image: linear-gradient(90deg, #000 70%, transparent 100%); }
    .on .tt { width: 80px; }
    .tt.full { -webkit-mask-image: none; }
    .attnbar { position: absolute; left: 14px; width: 109px; bottom: 1px; height: 2px; background: #fc5a3a; }
    .x { margin-left: 4px; }
    .plus { flex: 1; display: flex; align-items: center; justify-content: center; }
    .nav { height: 39px; flex: none; background: #f5f6f7; display: flex; align-items: center; padding-top: 1px; font: 400 13px "Noto Sans", sans-serif; color: #9a9da1; }
    .back { width: 34px; height: 34px; border-radius: 50%; border: 1px solid #b3b5b9; background: #fff; display: flex; align-items: center; justify-content: center; }
    .box { height: 30px; border: 1px solid #d6d9dd; border-radius: 4px; background: #fff; display: flex; }
    .vs { width: 1px; height: 22px; background: #dadcdf; }
    .host { color: #2e3436; }
    .ubl { position: relative; }
    .cnt { position: absolute; left: 9px; top: -6px; width: 14px; height: 12px; border-radius: 2px; background: #666a6e; color: #fff; font: 10px/12px "Noto Sans", sans-serif; text-align: center; }
    .sx { font: 800 16px "Open Sans", sans-serif; color: #0b3f8f; }
    .sx b { color: #f00; }
    .marks { height: 30px; flex: none; background: #f5f6f7; border-bottom: 1px solid #d5d8dc; display: flex; font: 400 13px "Noto Sans", sans-serif; color: #34383c; }
    .bmt { margin-left: 4px; }
    .bsep { width: 1px; height: 16px; background: #4b4e52; }
    .page { flex: 1; min-height: 0; display: flex; }
    .doc { flex: 1; display: flex; flex-direction: column; min-width: 0; }
    .bar { height: 50px; flex: none; display: flex; background: #2196f3; color: #bbdefb; }
    .brand { width: 241px; border-right: 1px solid #a9d6fa; display: flex; align-items: center; padding-left: 56px; font-size: 24px; font-weight: 300; }
    .dev { background: #1cbc9c; border-radius: 3px; color: #fff; width: 39px; height: 19px; margin: 4px 0 0 8px; font-size: 17px; font-weight: 400; display: flex; align-items: center; justify-content: center; }
    .ham { width: 46px; border-right: 1px solid #2fa6fb; display: flex; align-items: center; justify-content: center; }
    .exp { padding-left: 15px; width: 719px; font-size: 24px; font-weight: 300; display: flex; align-items: center; padding-top: 2px; }
    .find { display: flex; height: 30px; margin-top: 10px; background: #fff; color: #666; font-size: 16px; width: 602px; }
    .sel { width: 195px; border-right: 1px solid #ccc; display: flex; align-items: center; justify-content: space-between; padding: 0 3px 0 4px; }
    .inp { width: 377px; border-right: 1px solid #ccc; display: flex; align-items: center; padding-left: 9px; color: #d2d2d2; }
    .btn { flex: 1; display: flex; align-items: center; justify-content: center; padding-bottom: 3px; }
    .right { display: flex; font-size: 16px; font-weight: 300; padding-top: 1px; }
    .pill { width: 18px; height: 13px; border-radius: 6px; background: #fff; color: #2196f3; font: 500 10px/13px Roboto, sans-serif; text-align: center; }
    .body { flex: 1; display: flex; min-height: 0; }
    .side { width: 240px; flex: none; background: #fff; box-shadow: 1px 0 3px rgba(0,0,0,.25); display: flex; flex-direction: column; z-index: 1; color: #212121; font-size: 15px; font-weight: 500; }
    .mi { height: 48px; flex: none; display: flex; align-items: center; justify-content: space-between; padding: 0 15px 0 16px; }
    .mi svg { margin-top: 3px; }
    .hr { height: 1px; flex: none; background: #bbb; margin: 8px 0; }
    .main { flex: 1; padding: 0 65px; min-width: 0; display: flex; flex-direction: column; overflow: hidden; }
    .h1 { height: 131px; flex: none; border-bottom: 1px solid #e8e8e8; color: #2196f3; font-size: 56px; line-height: 66px; font-weight: 300; padding: 44px 0 0 0; }
    .p1 { font-size: 15px; line-height: 20px; padding-top: 26px; flex: none; height: 46px; }
    .p1 b { font-weight: 700; }
    .blue { color: #2196f3; }
    .p2 { flex: none; height: 63px; padding: 23px 0 0 4px; font-size: 15px; line-height: 20px; color: #2196f3; display: flex; align-items: flex-start; gap: 5px; }
    .p2 svg { margin-top: 3px; }
    .seg { height: 57px; flex: none; display: flex; font-size: 15px; margin-top: 5px; }
    .seg div { display: flex; justify-content: center; align-items: flex-end; padding-bottom: 12px; line-height: 20px; border-bottom: 1px solid #d5d5d5; margin-bottom: 1px; }
    .seg .s1 { width: 511px; color: #2196f3; border-bottom: 2px solid #2196f3; margin-bottom: 0; }
    .seg .s2 { width: 510px; } .seg .s3 { flex: 1; }
    .cols { display: flex; gap: 30px; margin-top: 37px; flex: 1; min-height: 0; }
    .card { width: 347px; flex: none; background: #fff; box-shadow: 0 0 4px rgba(0,0,0,.3); font-size: 12px; color: #737373; margin-bottom: -20px; }
    .ch { height: 42px; background: #f4f4f4; color: #262626; display: flex; align-items: center; padding-left: 15px; padding-top: 1px; }
    .rows { padding: 17px 15px 0; }
    .row { color: #263045; }
    .line { display: flex; height: 18px; align-items: center; gap: 8px; }
    .line fit-text { padding-top: 2px; }
    .cb { width: 18px; height: 18px; border: 2px solid #666; border-radius: 2px; flex: none; background: #fff; }
    .cb.focus { border-color: #2196f3; }
    .cb.on { background: #2196f3; border: none; }
    .cb svg { display: block; }
    .sw { display: flex; margin-left: auto; margin-top: -4px; }
    .sw i { width: 46px; height: 18px; background: #fff; border-radius: 2px; box-shadow: 1px 1px 3px rgba(0,0,0,.45); display: flex; justify-content: center; }
    .sw > i:first-child { position: relative; z-index: 1; }
    .sw i i { width: 16px; height: 16px; box-shadow: none; border-radius: 0; background: #f4f4f4; }
    .sw i i.k { background: #000; }
    .sub { display: flex; height: 27px; align-items: flex-end; color: #757575; line-height: 16px; padding-left: 52px; }
    .sub.for { padding-left: 56px; }
    .num { width: 77px; margin-left: 5px; border-bottom: 1px dotted #c4c4c4; height: 24px; display: flex; align-items: center; justify-content: space-between; padding: 1px 9px 0 4px; }
    .sub .lab { padding-bottom: 2px; }
    .pick { width: 134px; margin: 0 5px 0 5px; border-bottom: 1px solid #d5d5d5; height: 25px; display: flex; align-items: center; justify-content: space-between; padding: 3px 4px 0 14px; }
    .pick svg { margin-top: -3px; }
    .tlink { height: 50px; padding: 9px 13px 0 0; text-align: right; color: #2196f3; line-height: 16px; }
    .zoomrow { display: flex; height: 50px; align-items: flex-start; line-height: 24px; }
    .ns { width: 101px; }
    .zb { height: 24px; border-radius: 3px; background: #2196f3; box-shadow: 1px 1px 3px rgba(0,0,0,.4); color: #fff; display: flex; gap: 3px; align-items: center; justify-content: center; flex: none; font-size: 12.500px; }
    .zb.a { width: 43px; } .zb.b { width: 44px; }
    .px { width: 55px; height: 28px; margin: 0 30px 0 31px; border-bottom: 1px dotted #c4c4c4; padding: 4px 0 0 4px; }
    .pad { display: grid; grid-template-columns: 54px 55px 55px; column-gap: 61px; grid-template-rows: 24px 24px 24px; padding-left: 16px; }
    .reset { display: flex; align-items: center; justify-content: center; color: #444; padding-top: 1px; }
    .tree { display: block; width: 1102px; height: 536px; flex: none; background: #f5f5f5; }
    .sb { width: 12px; flex: none; background: #fcfcfc; border-left: 1px solid #dadbde; padding: 2px 0 0 2px; }
    .thumb { width: 6px; height: 647px; border-radius: 3px; background: #a8aaae; }
  `;

  private numBox() {
    return html`<div class="num"><span>3</span><svg class="ico" width="7" height="15" viewBox="0 0 7 15" fill="none" stroke="#888" stroke-width="1.200"><path d="m.8 3.300 2.700-2.500 2.700 2.500M.8 11.700l2.700 2.500 2.700-2.500"/></svg></div>`;
  }

  private row(r: Row) {
    return html`<div class="row" style="height:${r.h}px">
      <div class="line">
        <span class="cb ${r.on ? "on" : ""} ${r.focus ? "focus" : ""}">${r.on ? html`<svg width="18" height="18" viewBox="0 0 18 18"><path d="m3.600 9.400 3.600 3.500 7.300-7.500" fill="none" stroke="#fff" stroke-width="2.200"/></svg>` : nothing}</span>
        ${fit(r.label, r.w)}
        ${r.swatch ? html`<span class="sw"><i><i class="k"></i></i><i><i></i></i></span>` : nothing}
      </div>
      ${r.sub === "dec" ? html`<div class="sub"><span class="lab">${fit("decimals", 49)}</span>${this.numBox()}</div>` : nothing}
      ${r.sub === "for" ? html`<div class="sub for"><span class="lab">${fit("for", 15.500)}</span><div class="pick"><span>${fit("all", 12.500)}</span>${caret("#666", 8, 4.500)}</div><span class="lab">${fit("nodes", 33)}</span></div>` : nothing}
    </div>`;
  }

  render() {
    return html`
    <div class="screen">
      <div class="topbar">${strip(0, 1920, [
        [12, fit("Activities", 62.500)],
        [93, firefox(16)],
        [117, fit("Firefox Web Browser", 133)],
        [257, caret("#d5d1c8")],
        [931, fit("Mon May 18, 16:32", 117)],
        [1637, slackGlyph(19, ["#fff", "#fff", "#fff", "#fff"])],
        [1681, ico(23, 20, svg`<path d="M4 12a4 4 0 0 1 0-7 5 5 0 0 1 9.500-3A5 5 0 0 1 19 6a3.500 3.500 0 0 1 0 6z" fill="#9db4c6"/><circle cx="14" cy="13.500" r="7" fill="#4cae1c"/><path d="m10.500 13.500 2.500 2.800 4.300-5.500" fill="none" stroke="#fff" stroke-width="1.800"/>`)],
        [1728, fit("en₂", 20)],
        [1754, caret("#d5d1c8")],
        [1796, ico(13, 12, svg`<path d="M1 1h11v8.500H8.500L6.500 11l-2-1.500H1z" fill="none" stroke="#d5d1c8" stroke-width="1.700"/>`)],
        [1822, ico(14, 13, svg`<path d="M0 4h3l4-4v13L3 9H0z" fill="#d5d1c8"/><path d="M9 3q2 3.500 0 7" fill="none" stroke="#a5a197" stroke-width="1.400"/><path d="M11 1q3.500 5.500 0 11" fill="none" stroke="#8a867c" stroke-width="1.400"/>`)],
        [1849, ico(10, 13, svg`<path d="M3 0h4v1.500h3V13H0V1.500h3z" fill="#d5d1c8"/><path d="M6 3 2.500 7.500H5L4 11l3.500-4.500H5z" fill="#4b4840"/>`)],
        [1866, fit("55 %", 24)],
        [1896, caret("#d5d1c8")],
      ])}</div>
      <div class="below">
        <div class="dock">
          ${dock.map((d) => html`<div class="slot">
            <div class="tile ${d.active ? "active" : ""}">${d.icon}</div>
            ${d.dots ? html`<div class="dots">${Array.from({ length: d.dots }, () => html`<i class="dot"></i>`)}</div>` : nothing}
          </div>`)}
          <div class="grid9">${Array.from({ length: 9 }, () => html`<i></i>`)}</div>
        </div>
        <div class="window">
          <div class="title">${strip(59, 1920, [
            [827, fit("MSA & phylogenetic tree · TRAPID - Mozilla Firefox", 325)],
            [1837, ico(6, 2, svg`<rect width="6" height="2" fill="#9aa1ae"/>`)],
            [1869, ico(6, 6, svg`<path d="M2 0h4v4zM0 2v4h4z" fill="#9aa1ae"/>`)],
            [1897, html`<span class="close"><svg width="8" height="8" viewBox="0 0 8 8"><path d="m1.300 1.300 5.400 5.400M6.700 1.300 1.300 6.700" stroke="#303440" stroke-width="1.800"/></svg></span>`],
          ])}</div>
          <div class="tabs">
            <div class="pin">${tomato}<i></i></div>
            ${tabs.map(([icon, text, w], i) => html`<div class="tab ${i === 0 ? "on" : ""}">
              ${icon}<div class="tt ${w < 85 && i ? "full" : ""}">${fit(text, w)}</div>
              ${i === 0 ? html`<svg class="ico x" width="10" height="10" viewBox="0 0 10 10"><path d="m.8.8 8.400 8.400M9.200.8.8 9.200" stroke="#46494f" stroke-width="1.700"/></svg>` : nothing}
              ${icon === google ? html`<i class="attnbar"></i>` : nothing}
            </div>`)}
            <div class="plus"><svg width="14" height="14" viewBox="0 0 14 14"><path d="M7 0v14M0 7h14" stroke="#b4bac6" stroke-width="1.800"/></svg></div>
          </div>
          <div class="nav">${strip(59, 1920, [
            [62, html`<div class="back">${arrowL}</div>`],
            [104, arrowR],
            [136, reload],
            [167, home],
            [302, html`<div class="box" style="width:908px">${strip(303, 1209, [
              [309, shield],
              [331, html`<i class="vs"></i>`],
              [337, lock],
              [362, html`${fit("bioinformatics.psb.", 114)}<span class="host">${fit("ugent.be", 53)}</span>${fit("/trapid_dev_migration/tools/create_tree/1420/1420_HOM04x5M006132", 436)}`],
              [1061, reader],
              [1090, html`<i class="vs"></i>`],
              [1102, dots3],
              [1130, pocket],
              [1160, qr],
              [1186, star],
            ])}</div>`],
            [1220, html`<div class="box" style="width:354px">${strip(1221, 1573, [[1228, glass], [1250, fit("Search", 41)]])}</div>`],
            [1692, library],
            [1724, sidebarI],
            [1759, html`<span class="sx">S<b>!</b></span>`],
            [1788, simg],
            [1820, person],
            [1852, html`<span class="ubl">${ublock}<span class="cnt">2</span></span>`],
            [1879, html`<i class="vs"></i>`],
            [1895, burger(12, 12, N, 2)],
          ])}</div>
          <div class="marks">${strip(59, 1920, [
            [71, bm(zimbra, "PSB webmail", 77)],
            [180, bm(gitlab, "PSB GitLab", 65)],
            [277, bm(floppy, "PSB floppy", 65)],
            [374, bsep],
            [386, bm(tomato, "TomatoTimer", 80)],
            [498, bsep],
            [510, bm(T, "TRAPID 2", 55.500)],
            [598, bm(T, "TRAPID dev", 70)],
            [700, bm(tIcon("#2196f3"), "TRAPID frbuc", 80.500)],
            [813, bm(pma, "phpMyAdmin", 78.500)],
            [924, bm(plaza, "PLAZA", 40)],
            [997, bsep],
            [1009, bm(github, "GitHub", 41)],
            [1083, bm(gmail, "Gmail", 33)],
            [1148, bm(calendar, "Calendar", 53)],
            [1234, bm(soundcloud, "SoundCloud", 72)],
            [1338, bm(spotify(16, "#1fd160", "#fff"), "Spotify Web Player", 113)],
            [1483, bsep],
            [1495, bm(athena, "Athena UGent", 84)],
            [1611, bm(globe, "Reveal b", 51)],
            [1694, bsep],
            [1706, bm(disq, "Loading...", 57)],
          ])}</div>
          <div class="page">
            <div class="doc">
              <div class="bar">
                <div class="brand">${fit("TRAPID", 81)}<span class="dev">${fit("dev", 25)}</span></div>
                <div class="ham">${burger(13, 12, "#bbdefb", 2)}</div>
                <div class="exp">${fit("PANICUM", 106)}</div>
                <div class="find">
                  <div class="sel">${fit("Transcript identifier", 138)}${caret("#666", 8, 4.500)}</div>
                  <div class="inp">${fit("Search this experiment...", 179)}</div>
                  <div class="btn"><svg width="15" height="15" viewBox="0 0 15 15" fill="none" stroke="#555"><circle cx="6" cy="6" r="4.700" stroke-width="1.900"/><path d="m9.300 9.300 4.700 4.700" stroke-width="2.400"/></svg></div>
                </div>
                <div class="right">${strip(1667, 1908, [
                  [1725, fit("Jobs", 33)],
                  [1766, html`<span class="pill">1</span>`],
                  [1814, fit("Log", 25)],
                  [1869, gear],
                  [1892, caret("#bbdefb", 7.500, 4)],
                ])}</div>
              </div>
              <div class="body">
                <div class="side">
                  ${menu.map((m) => typeof m === "string" ? html`<div class="hr"></div>` : html`<div class="mi">${fit(m[0], m[1])}${m[2] ? caret("#212121", 8, 4) : nothing}</div>`)}
                </div>
                <div class="main">
                  <div class="h1">${fit("MSA & phylogenetic tree", 600)}</div>
                  <div class="p1"><b>${fit("Gene family: ", 90)}</b><span class="blue">${fit("1420_HOM04x5M006132", 172.500)}</span>${fit(" (6 transcripts).", 103.500)}</div>
                  <div class="p2"><svg width="10" height="13" viewBox="0 0 10 13"><path d="m1.500 1.300 5.200 5.200-5.200 5.200" fill="none" stroke="#2196f3" stroke-width="3.400"/></svg>${fit("Create MSA / phylogenetic tree with different species or settings", 435)}</div>
                  <div class="seg"><div class="s1">${fit("Phylogenetic tree", 117)}</div><div class="s2">${fit("Multiple sequence alignment(s)", 213)}</div><div class="s3">${fit("Files & extra", 83)}</div></div>
                  <div class="cols">
                    <div class="card">
                      <div class="ch">${fit("Visualization settings & export", 165)}</div>
                      <div class="rows">
                        ${rows.map((r) => this.row(r))}
                        <div class="tlink">${fit("show taxonomy colors table", 153)}</div>
                        <div class="zoomrow">
                          <span class="ns">${fit("node size", 51.500)}</span>
                          <span class="zb a">${zoomI(false)}</span>
                          <span class="px">${fit("12px", 26)}</span>
                          <span class="zb b">${zoomI(true)}</span>
                        </div>
                        <div class="pad">
                          <span></span><span class="zb">${zoomI(true)} Y</span><span></span>
                          <span class="zb">${zoomI(false)} X</span><span class="reset">${fit("RESET", 38.500)}</span><span class="zb">${zoomI(true)} X</span>
                          <span></span><span class="zb">${zoomI(false)} Y</span><span></span>
                        </div>
                      </div>
                    </div>
                    <svg class="tree" viewBox="741 544 1102 536">
                      <g stroke="#777" stroke-dasharray="2 3">${leaves.map(([, y, , , x]) => x < 1583 ? svg`<path d="M${x} ${y}H1583"/>` : nothing)}</g>
                      <g stroke="#000">${hor.map(([y, a, b]) => svg`<path d="M${a} ${y}H${b}"/>`)}${ver.map(([x, a, b]) => svg`<path d="M${x} ${a}V${b}"/>`)}</g>
                      <g font-family="Open Sans" font-size="9.700" font-weight="600">${leaves.map(([t, y, c, w]) => svg`<text x="1588" y=${y + 3} fill=${c} textLength=${w}>${t}</text>`)}</g>
                      <g font-family="Open Sans" font-size="12.500" fill="#000">
                        <text transform="translate(1763 654) rotate(-90)" textLength="95">Meta-annotation</text>
                        <text transform="translate(1787 654) rotate(-90)" textLength="85">Protein_coding</text>
                      </g>
                      <rect x="1750.500" y="1000.500" width="13" height="13" fill="#31628f" stroke="#8fa9c2" stroke-width="1"/>
                      <circle cx="1785.300" cy="1007" r="5" fill="#e69f00"/>
                    </svg>
                  </div>
                </div>
              </div>
            </div>
            <div class="sb"><div class="thumb"></div></div>
          </div>
        </div>
      </div>
    </div>`;
  }
}
